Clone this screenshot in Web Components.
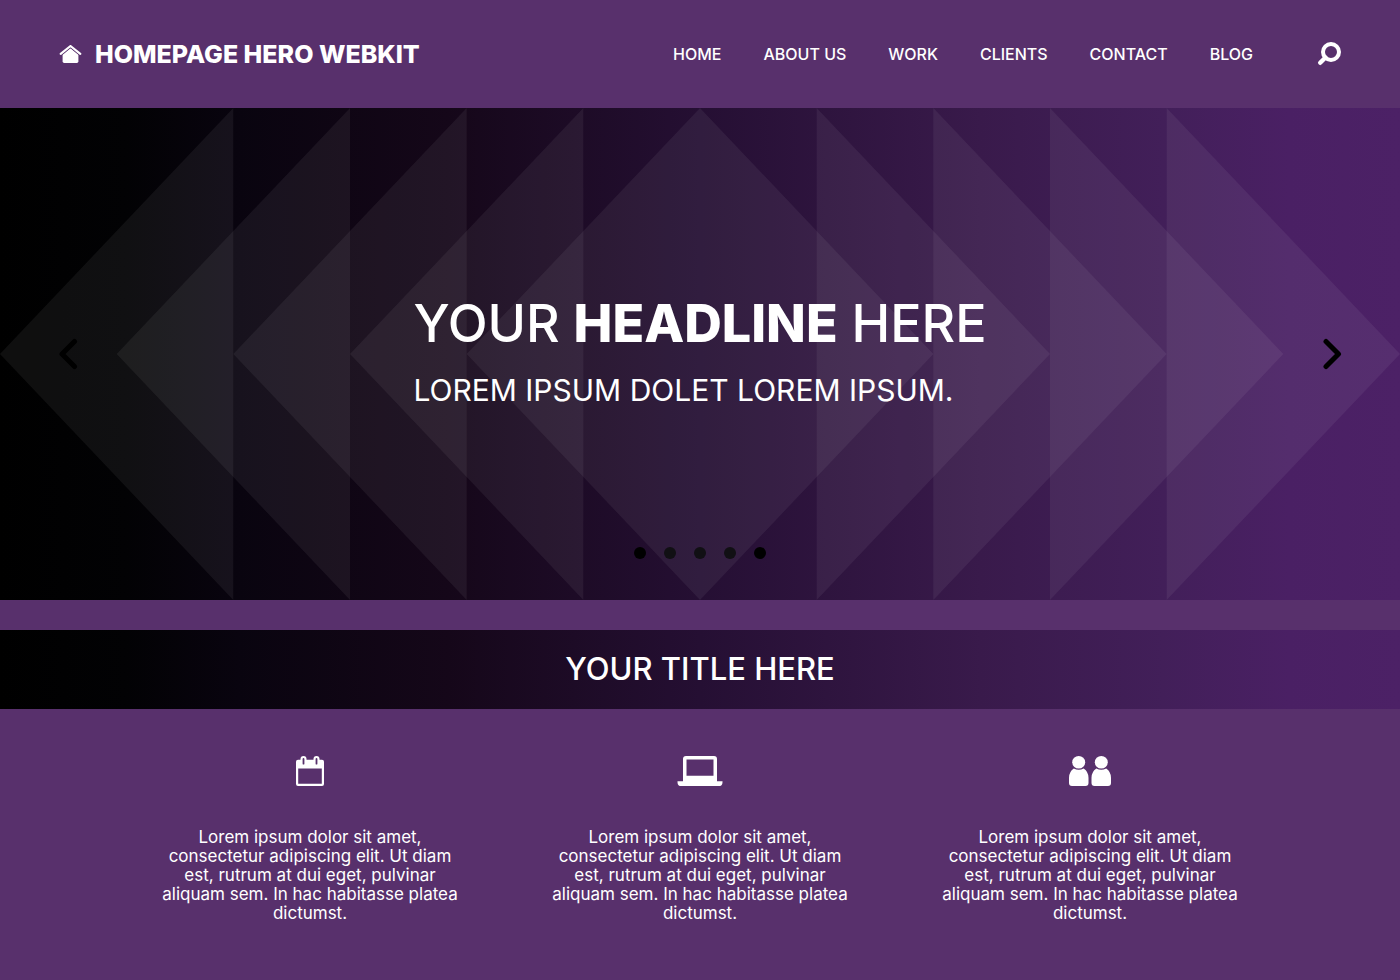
<!DOCTYPE html>
<html lang="en">
<head>
<meta charset="utf-8">
<meta name="viewport" content="width=device-width, initial-scale=1">
<title>Homepage Hero Webkit</title>
<style>
  body {
    margin: 0;
    min-height: 100vh;
    background: #58306c;
    color: #fff;
    font-family: Inter, "Open Sans", sans-serif;
    --band: linear-gradient(90deg, #000 0%, #020204 9%, #09040f 17%, #150719 32%, #250f33 50%, #391a4b 70%, #421f59 83%, #4a2064 92%, #4c2166 100%);
  }
</style>
</head>
<body>
<site-header>
  <span slot="brand">HOMEPAGE HERO WEBKIT</span>
  <a href="#home">HOME</a>
  <a href="#about">ABOUT US</a>
  <a href="#work">WORK</a>
  <a href="#clients">CLIENTS</a>
  <a href="#contact">CONTACT</a>
  <a href="#blog">BLOG</a>
</site-header>
<main>
  <hero-slider>
    <span slot="title">YOUR <strong>HEADLINE</strong> HERE</span>
    <span slot="subtitle">LOREM IPSUM DOLET LOREM IPSUM.</span>
  </hero-slider>
  <title-band>YOUR TITLE HERE</title-band>
  <feature-list>
    <feature-card icon="calendar">Lorem ipsum dolor sit amet,<br>consectetur adipiscing elit. Ut diam<br>est, rutrum at dui eget, pulvinar<br>aliquam sem. In hac habitasse platea<br>dictumst.</feature-card>
    <feature-card icon="laptop">Lorem ipsum dolor sit amet,<br>consectetur adipiscing elit. Ut diam<br>est, rutrum at dui eget, pulvinar<br>aliquam sem. In hac habitasse platea<br>dictumst.</feature-card>
    <feature-card icon="people">Lorem ipsum dolor sit amet,<br>consectetur adipiscing elit. Ut diam<br>est, rutrum at dui eget, pulvinar<br>aliquam sem. In hac habitasse platea<br>dictumst.</feature-card>
  </feature-list>
</main>
<script>
  class BaseElement extends HTMLElement {
    connectedCallback() {
      if (this.shadowRoot) return;
      this.attachShadow({ mode: 'open' }).innerHTML = this.render();
    }
  }

  customElements.define('site-header', class extends BaseElement {
    render() {
      return `
        <style>
          :host { display: block; }
          header { display: flex; align-items: center; justify-content: space-between; gap: 24px; min-height: 108px; padding: 0 59px; box-sizing: border-box; }
          svg { display: block; }
          .brand { display: flex; align-items: center; gap: 13px; color: inherit; text-decoration: none; font-size: 25px; line-height: 32px; font-weight: 800; white-space: nowrap; }
          .right { display: flex; align-items: center; gap: 64px; }
          nav { display: flex; gap: 42px; }
          ::slotted(a) { color: #fff; text-decoration: none; font-size: 16px; line-height: 20px; font-weight: 500; white-space: nowrap; }
          button { border: 0; padding: 0; background: none; color: inherit; cursor: pointer; }
        </style>
        <header>
          <a class="brand" href="#home">
            <svg width="23" height="18" viewBox="0 0 23 18" fill="#fff" aria-hidden="true">
              <path d="M11.500 3.200 19.400 9.800V16.200Q19.400 18 17.800 18H5.200Q3.600 18 3.600 16.200V9.800Z"/>
              <path d="M1.700 8.900 11.500 1 21.300 8.900" fill="none" stroke="#58306c" stroke-width="3.300"/>
              <path d="M1.700 8.900 11.500 1 21.300 8.900" fill="none" stroke="#fff" stroke-width="2.200" stroke-linecap="round" stroke-linejoin="round"/>
            </svg>
            <slot name="brand"></slot>
          </a>
          <div class="right">
            <nav aria-label="Main"><slot></slot></nav>
            <button type="button" aria-label="Search">
              <svg width="24" height="24" viewBox="0 0 24 24" fill="none" stroke="#fff" aria-hidden="true">
                <circle cx="14" cy="10" r="8" stroke-width="4"/>
                <path d="M8.500 15.500 3.200 20.800" stroke-width="4.400" stroke-linecap="round"/>
              </svg>
            </button>
          </div>
        </header>`;
    }
  });

  customElements.define('hero-slider', class extends BaseElement {
    render() {
      const left = [0, 1, 2, 3].map(i => `<path d="M${i} 1 ${i + 2} 0V2Z"/>`).join('');
      const right = [7, 8, 9, 10].map(i => `<path d="M${i + 2} 1 ${i} 0V2Z"/>`).join('');
      const dots = [1, 2, 3, 4, 5].map(i => `<button type="button" aria-label="Slide ${i}"></button>`).join('');
      return `
        <style>
          :host { display: block; --heavy: 800; }
          section { position: relative; display: grid; grid-template-columns: 1fr auto 1fr; grid-template-rows: 1fr auto 1fr; min-height: 492px; padding: 0 58px; box-sizing: border-box; background: var(--band); }
          .pattern { position: absolute; inset: 0; width: 100%; height: 100%; fill: #fff; fill-opacity: .06; }
          button { border: 0; padding: 0; background: none; cursor: pointer; position: relative; }
          .arrow svg { display: block; fill: none; stroke: #000; stroke-width: 5; stroke-linecap: round; stroke-linejoin: round; }
          .arrow { grid-row: 2; align-self: center; justify-self: start; }
          .next { grid-column: 3; justify-self: end; }
          .copy { grid-row: 2; grid-column: 2; position: relative; }
          h1 { margin: 0; font-size: 52px; line-height: 62px; font-weight: 500; }
          p { margin: 10px 0 0; font-size: 30px; line-height: 50px; font-weight: 400; }
          ::slotted(span) { white-space: nowrap; }
          .dots { grid-row: 3; grid-column: 2; align-self: end; justify-self: center; display: flex; gap: 18px; padding-bottom: 41px; }
          .dots button { width: 12px; height: 12px; border-radius: 50%; background: #111014; }
          .dots button:first-child, .dots button:last-child { background: #000; }
        </style>
        <section aria-label="Highlights">
          <svg class="pattern" viewBox="0 0 12 2" preserveAspectRatio="none" aria-hidden="true">
            ${left}<path d="M4 1 6 0 8 1 6 2Z"/>${right}
          </svg>
          <button class="arrow" type="button" aria-label="Previous">
            <svg width="20" height="32" viewBox="0 0 20 32"><path d="M16.500 3.500 4 16 16.500 28.500"/></svg>
          </button>
          <div class="copy">
            <h1><slot name="title"></slot></h1>
            <p><slot name="subtitle"></slot></p>
          </div>
          <button class="arrow next" type="button" aria-label="Next">
            <svg width="20" height="32" viewBox="0 0 20 32"><path d="M4 3.500 16.500 16 4 28.500"/></svg>
          </button>
          <div class="dots">${dots}</div>
        </section>`;
    }
  });

  customElements.define('title-band', class extends BaseElement {
    render() {
      return `
        <style>
          :host { display: block; margin-top: 30px; padding: 19px 20px 21px; background: var(--band); }
          h2 { margin: 0; font-size: 31px; line-height: 39px; font-weight: 500; text-align: center; }
        </style>
        <h2><slot></slot></h2>`;
    }
  });

  customElements.define('feature-list', class extends BaseElement {
    render() {
      return `
        <style>
          :host { display: grid; grid-template-columns: repeat(auto-fit, minmax(300px, 1fr)); max-width: 1170px; margin: 0 auto; padding: 47px 0 48px; }
        </style>
        <slot></slot>`;
    }
  });

  const ICONS = {
    calendar: `<svg width="28" height="30" viewBox="0 0 28 31" preserveAspectRatio="none" fill="#fff" aria-hidden="true">
      <path fill-rule="evenodd" d="M2 4H26Q28 4 28 6V29Q28 31 26 31H2Q0 31 0 29V6Q0 4 2 4ZM2.200 13V28.600H25.800V13Z"/>
      <rect x="4.500" y="0" width="6" height="10" rx="3"/>
      <rect x="17.500" y="0" width="6" height="10" rx="3"/>
      <path d="M7.500 3V8M20.500 3V8" stroke="#58306c" stroke-width="1.800" stroke-linecap="round"/>
    </svg>`,
    laptop: `<svg width="46" height="30" viewBox="0 0 46 31" preserveAspectRatio="none" fill="#fff" aria-hidden="true">
      <path fill-rule="evenodd" d="M9 0H37Q40 0 40 3V26H45.500V27Q45.500 31 41.500 31H4.500Q.5 31 .5 27V26H6V3Q6 0 9 0ZM9.500 3.600V20.500H36.500V3.600Z"/>
    </svg>`,
    people: `<svg width="42" height="30" viewBox="0 0 42 31" preserveAspectRatio="none" fill="#fff" aria-hidden="true">
      <circle cx="9.700" cy="6.500" r="6.500"/><circle cx="32.300" cy="6.500" r="6.500"/>
      <path d="M4.800 13Q9.700 15.600 14.700 13Q19.500 16.500 19.500 22.500V28Q19.500 31 16.500 31H3Q0 31 0 28V22.500Q0 16.500 4.800 13Z"/>
      <path d="M27.300 13Q32.300 15.600 37.200 13Q42 16.500 42 22.500V28Q42 31 39 31H25.500Q22.500 31 22.500 28V22.500Q22.500 16.500 27.300 13Z"/>
    </svg>`
  };

  customElements.define('feature-card', class extends BaseElement {
    render() {
      return `
        <style>
          :host { display: flex; flex-direction: column; align-items: center; gap: 42px; }
          svg { display: block; }
          p { margin: 0; font-size: 17px; line-height: 19px; text-align: center; }
        </style>
        ${ICONS[this.getAttribute('icon')]}
        <p><slot></slot></p>`;
    }
  });
</script>
<style>
  hero-slider strong { font-weight: 800; }
</style>
</body>
</html>
